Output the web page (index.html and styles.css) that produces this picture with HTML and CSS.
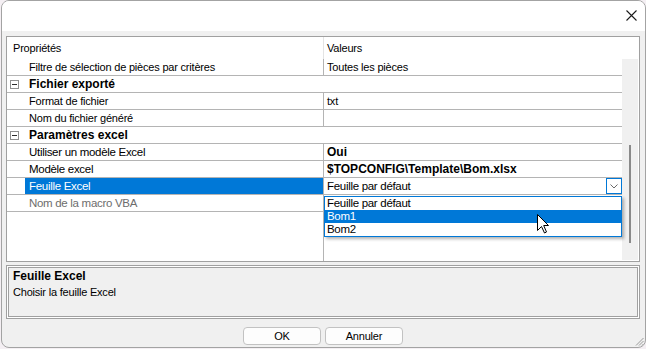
FILE: index.html
```html
<!DOCTYPE html>
<html lang="fr">

<head>
    <meta charset="UTF-8">
    <title>Propriétés</title>
    <link rel="stylesheet" href="styles.css">
</head>

<body>
    <div class="window">
        <div class="titlebar">
            <svg class="close" width="11" height="11" viewBox="0 0 11 11">
                <path d="M0.5 0.5 L10.5 10.5 M10.5 0.5 L0.5 10.5" stroke="#1b1b1b" stroke-width="1.1" fill="none"/>
            </svg>
        </div>

        <div class="content">
            <div class="grid">
                <div class="grid-head">
                    <span class="head-name">Propriétés</span>
                    <span class="head-value">Valeurs</span>
                </div>

                <div class="grid-main">
                    <div class="rows">
                        <div class="row">
                            <span class="gutter"></span>
                            <span class="name">Filtre de sélection de pièces par critères</span>
                            <span class="value">Toutes les pièces</span>
                        </div>
                        <div class="row category">
                            <span class="gutter"><i class="toggle"></i></span>
                            <span class="name">Fichier exporté</span>
                        </div>
                        <div class="row">
                            <span class="gutter"></span>
                            <span class="name">Format de fichier</span>
                            <span class="value">txt</span>
                        </div>
                        <div class="row">
                            <span class="gutter"></span>
                            <span class="name">Nom du fichier généré</span>
                            <span class="value"></span>
                        </div>
                        <div class="row category">
                            <span class="gutter"><i class="toggle"></i></span>
                            <span class="name">Paramètres excel</span>
                        </div>
                        <div class="row large">
                            <span class="gutter"></span>
                            <span class="name">Utiliser un modèle Excel</span>
                            <span class="value bold">Oui</span>
                        </div>
                        <div class="row large">
                            <span class="gutter"></span>
                            <span class="name">Modèle excel</span>
                            <span class="value bold">$TOPCONFIG\Template\Bom.xlsx</span>
                        </div>
                        <div class="row large selected">
                            <span class="gutter"></span>
                            <span class="name">Feuille Excel</span>
                            <span class="value combo">
                                <span>Feuille par défaut</span>
                                <span class="combo-btn">
                                    <svg width="8" height="5" viewBox="0 0 8 5">
                                        <path d="M0.5 0.5 L4 4 L7.5 0.5" stroke="#6b6b6b" fill="none"/>
                                    </svg>
                                </span>
                            </span>
                        </div>
                        <div class="row large">
                            <span class="gutter"></span>
                            <span class="name disabled">Nom de la macro VBA</span>
                            <span class="value"></span>
                        </div>
                        <div class="row filler">
                            <span class="gutter"></span>
                            <span class="name"></span>
                            <span class="value"></span>
                        </div>
                    </div>
                    <div class="scrollbar">
                        <div class="thumb"></div>
                    </div>
                </div>

                <!-- open list of the combo -->
                <ul class="droplist">
                    <li>Feuille par défaut</li>
                    <li class="active">Bom1</li>
                    <li>Bom2</li>
                </ul>
                <svg class="pointer" width="13" height="20" viewBox="0 0 13 20">
                    <path d="M0.5 0.5 L0.5 16.5 L4.5 12.5 L7.5 19 L9.5 18 L6.7 11.5 L11.5 11.5 Z" fill="#fff" stroke="#000"
                        stroke-width="1" stroke-linejoin="round"/>
                </svg>
            </div>

            <div class="desc">
                <div class="desc-inner">
                    <div class="desc-title">Feuille Excel</div>
                    <div class="desc-text">Choisir la feuille Excel</div>
                </div>
            </div>

            <div class="buttons">
                <button type="button">OK</button>
                <button type="button">Annuler</button>
            </div>
        </div>

        <svg class="grip" width="9" height="9" viewBox="0 0 9 9">
            <path d="M8.5 1 L1 8.5 M8.5 4 L4 8.5 M8.5 7 L7 8.5" stroke="#9a9a9a" fill="none"/>
        </svg>
    </div>
</body>

</html>
```

FILE: styles.css
```css
* {
    box-sizing: border-box;
}

html,
body {
    margin: 0;
    padding: 0;
}

body {
    background-color: #f4eff3;
    font-family: "Liberation Sans", Arial, sans-serif;
    font-size: 11px;
    letter-spacing: -0.2px;
    color: #000;
}

.window {
    position: relative;
    width: 645px;
    height: 348px;
    margin-left: 1px;
    border: 1px solid #a3a3a3;
    border-radius: 8px;
    background-color: #f0f0f0;
    overflow: hidden;
    display: flex;
    flex-direction: column;
}

.titlebar {
    height: 30px;
    flex-shrink: 0;
    background-color: #fff;
    display: flex;
    justify-content: flex-end;
    align-items: flex-start;
    padding: 9px 8px 0 0;
}

.content {
    flex: 1;
    display: flex;
    flex-direction: column;
    padding: 5px 5px 0 4px;
}

/* property grid */
.grid {
    position: relative;
    height: 226px;
    flex-shrink: 0;
    border: 1px solid #a0a0a0;
    background-color: #fff;
    display: flex;
    flex-direction: column;
}

.grid-head {
    height: 22px;
    display: grid;
    grid-template-columns: 316px 1fr;
    line-height: 22px;
}

.head-name {
    padding-left: 6px;
}

.head-value {
    border-left: 1px solid #e4e4e4;
    padding-left: 3px;
}

.grid-main {
    flex: 1;
    display: flex;
}

.rows {
    width: 615px;
    display: flex;
    flex-direction: column;
}

.row {
    display: grid;
    grid-template-columns: 18px 298px 1fr;
    height: 17px;
    line-height: 16px;
    border-bottom: 1px solid #b4b4b4;
    white-space: nowrap;
}

.row .name {
    padding-left: 4px;
}

.row.large .name {
    font-size: 11.5px;
    letter-spacing: -0.3px;
}

.row .value {
    border-left: 1px solid #b4b4b4;
    padding-left: 3px;
}

.row.category .name {
    grid-column: 2 / -1;
    font-weight: bold;
    font-size: 12px;
    letter-spacing: 0;
}

.row .value.bold {
    font-weight: bold;
    font-size: 12px;
    letter-spacing: 0;
}

.row.selected .name {
    background-color: #0078d7;
    color: #fff;
}

.row .name.disabled {
    color: #6d6d6d;
}

.row.filler {
    flex: 1;
    border-bottom: none;
}

.gutter {
    display: flex;
    align-items: center;
    padding-left: 3px;
}

.toggle {
    width: 9px;
    height: 9px;
    border: 1px solid #8f8f8f;
    position: relative;
    background-color: #fff;
}

.toggle::after {
    content: "";
    position: absolute;
    left: 1px;
    top: 3px;
    width: 5px;
    height: 1px;
    background-color: #2b2b2b;
}

.combo {
    display: flex;
    justify-content: space-between;
    font-size: 11.5px;
    letter-spacing: -0.3px;
}

.combo-btn {
    width: 16px;
    height: 16px;
    border: 1px solid #0078d7;
    display: flex;
    align-items: center;
    justify-content: center;
}

.scrollbar {
    width: 16px;
    margin: 0 1px 1px 0;
    background-color: #f0f0f0;
    padding-top: 86px;
    display: flex;
    justify-content: center;
}

.thumb {
    width: 2px;
    height: 98px;
    background-color: #8a8a8a;
}

/* drop-down list of the combo */
.droplist {
    position: absolute;
    left: 317px;
    top: 159px;
    width: 298px;
    margin: 0;
    padding: 0;
    list-style: none;
    border: 1px solid #0078d7;
    background-color: #fff;
    box-shadow: 2px 2px 3px rgba(0, 0, 0, 0.3);
    font-size: 11.5px;
    letter-spacing: -0.3px;
}

.droplist li {
    height: 13px;
    line-height: 13px;
    padding-left: 2px;
}

.droplist li.active {
    background-color: #0078d7;
    color: #fff;
}

.pointer {
    position: absolute;
    left: 530px;
    top: 177px;
}

/* description panel */
.desc {
    margin-top: 3px;
    height: 54px;
    border: 1px solid #a0a0a0;
    padding: 1px;
    background-color: #fff;
}

.desc-inner {
    height: 100%;
    border: 1px solid #a0a0a0;
    background-color: #f0f0f0;
    padding: 0 4px;
}

.desc-title {
    font-weight: bold;
    font-size: 12px;
    letter-spacing: 0;
    line-height: 15px;
    margin-top: 1px;
}

.desc-text {
    line-height: 16px;
}

.buttons {
    display: flex;
    justify-content: center;
    gap: 4px;
    margin-top: 8px;
}

button {
    width: 78px;
    height: 18px;
    padding: 0;
    border: 1px solid #c2c2c2;
    border-radius: 4px;
    background-color: #fdfdfd;
    font-family: "Liberation Sans", Arial, sans-serif;
    font-size: 11px;
    letter-spacing: -0.2px;
    color: #000;
}

.grip {
    position: absolute;
    right: 1px;
    bottom: 1px;
}
```
